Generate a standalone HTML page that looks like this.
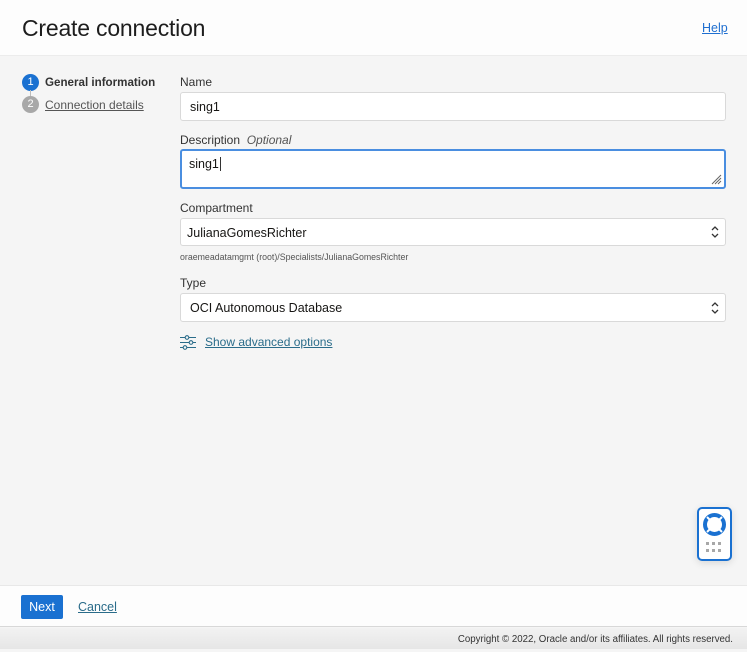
<!DOCTYPE html>
<html><head><style>
*{box-sizing:border-box;margin:0;padding:0}
body{width:747px;height:649px;background:#f5f5f5;font-family:"Liberation Sans",sans-serif;color:#161513;position:relative;overflow:hidden}
.hdr{position:absolute;left:0;top:0;width:747px;height:56px;background:#fdfdfd;border-bottom:1px solid #ececec}
.hdr h1{position:absolute;left:22px;top:15px;font-size:23px;font-weight:normal;color:#1d1d1d;letter-spacing:-0.2px}
.help{position:absolute;left:702px;top:21px;font-size:12.5px;color:#1f6fd0;text-decoration:underline}
.step{position:absolute;left:22px;font-size:12px;display:flex;align-items:center}
.step .c{width:17px;height:17px;border-radius:50%;color:#fff;font-size:11px;text-align:center;line-height:17px;margin-right:6px}
.lbl{position:absolute;left:180px;font-size:12px;color:#333}
.inp{position:absolute;left:180px;width:546px;background:#fff;border:1px solid #d9d9d9;border-radius:3px;font-size:12.5px;padding-left:9px}
.arr{position:absolute;right:6px;top:50%;transform:translateY(-50%);width:8px;height:14px}
.foot{position:absolute;left:0;top:585px;width:747px;height:42px;background:#fdfdfd;border-top:1px solid #e8e8e8;border-bottom:1px solid #d8d8d8}
.next{position:absolute;left:21px;top:9px;width:42px;height:24px;background:#1a71d1;border-radius:2px;color:#fff;font-size:12.5px;text-align:center;line-height:25px}
.cancel{position:absolute;left:78px;top:14px;font-size:12.5px;color:#2a6c8a;text-decoration:underline}
.copy{position:absolute;left:0;top:628px;width:747px;height:21px;background:linear-gradient(#f2f2f2,#e6e6e6);font-size:9.7px;color:#333;text-align:right;padding-right:14px;line-height:24px}
</style></head><body>
<div class="hdr"><h1>Create connection</h1><span class="help">Help</span></div>
<div class="step" style="top:74px"><span class="c" style="background:#1a71d1">1</span><b style="color:#333;font-size:11.6px">General information</b></div>
<div style="position:absolute;left:30px;top:90px;width:1px;height:7px;background:#bbb"></div>
<div class="step" style="top:96px"><span class="c" style="background:#a8a8a8">2</span><span style="color:#555;text-decoration:underline">Connection details</span></div>

<div class="lbl" style="top:75px">Name</div>
<div class="inp" style="top:92px;height:29px;line-height:28px">sing1</div>
<div class="lbl" style="top:133px">Description &nbsp;<i style="color:#555">Optional</i></div>
<div class="inp" style="top:149px;height:40px;border:2px solid #4a8ee0;padding-left:7px;padding-top:5px;line-height:16px">sing1<span style="border-left:1px solid #333;margin-left:1px"></span>
<svg style="position:absolute;right:2px;bottom:2px" width="11" height="11"><path d="M10 1L1 10M10 4L4 10M10 7L7 10" stroke="#666" stroke-width="1"/></svg></div>
<div class="lbl" style="top:201px">Compartment</div>
<div class="inp" style="top:218px;height:28px;line-height:28px;padding-left:6px">JulianaGomesRichter<svg class="arr" viewBox="0 0 8 14"><path d="M1 5L4 2L7 5M1 9L4 12L7 9" fill="none" stroke="#333" stroke-width="1.3"/></svg></div>
<div style="position:absolute;left:180px;top:252px;font-size:8.8px;color:#555">oraemeadatamgmt (root)/Specialists/JulianaGomesRichter</div>
<div class="lbl" style="top:276px">Type</div>
<div class="inp" style="top:293px;height:29px;line-height:29px">OCI Autonomous Database<svg class="arr" viewBox="0 0 8 14"><path d="M1 5L4 2L7 5M1 9L4 12L7 9" fill="none" stroke="#333" stroke-width="1.3"/></svg></div>
<svg style="position:absolute;left:180px;top:335px" width="16" height="15" fill="none" stroke="#2a6c8a" stroke-width="1.1"><path d="M0 2.5H5M9 2.5H16M0 7.5H9M13 7.5H16M0 12.5H3M7 12.5H16"/><circle cx="7" cy="2.5" r="1.8"/><circle cx="11" cy="7.5" r="1.8"/><circle cx="5" cy="12.5" r="1.8"/></svg>
<div style="position:absolute;left:205px;top:335px;font-size:12px;color:#2a6c8a;text-decoration:underline">Show advanced options</div>

<div style="position:absolute;left:697px;top:507px;width:35px;height:54px;border:2px solid #1a71d1;border-radius:5px;background:#fff;box-shadow:0 2px 8px rgba(0,0,0,.12)">
<svg style="position:absolute;left:3px;top:3px" width="25" height="25"><circle cx="12.5" cy="12.5" r="9.5" fill="none" stroke="#1a71d1" stroke-width="4"/><circle cx="12.5" cy="12.5" r="5" fill="none" stroke="#fff" stroke-width="1"/><path d="M5 5L9 9M20 5L16 9M5 20L9 16M20 20L16 16" stroke="#fff" stroke-width="2"/></svg>
<svg style="position:absolute;left:7px;top:33px" width="18" height="12" fill="#a8a8a8"><rect x="0" y="0" width="3" height="3"/><rect x="6" y="0" width="3" height="3"/><rect x="12" y="0" width="3" height="3"/><rect x="0" y="7" width="3" height="3"/><rect x="6" y="7" width="3" height="3"/><rect x="12" y="7" width="3" height="3"/></svg>
</div>

<div class="foot"><div class="next">Next</div><span class="cancel">Cancel</span></div>
<div class="copy">Copyright © 2022, Oracle and/or its affiliates. All rights reserved.</div>
</body></html>
